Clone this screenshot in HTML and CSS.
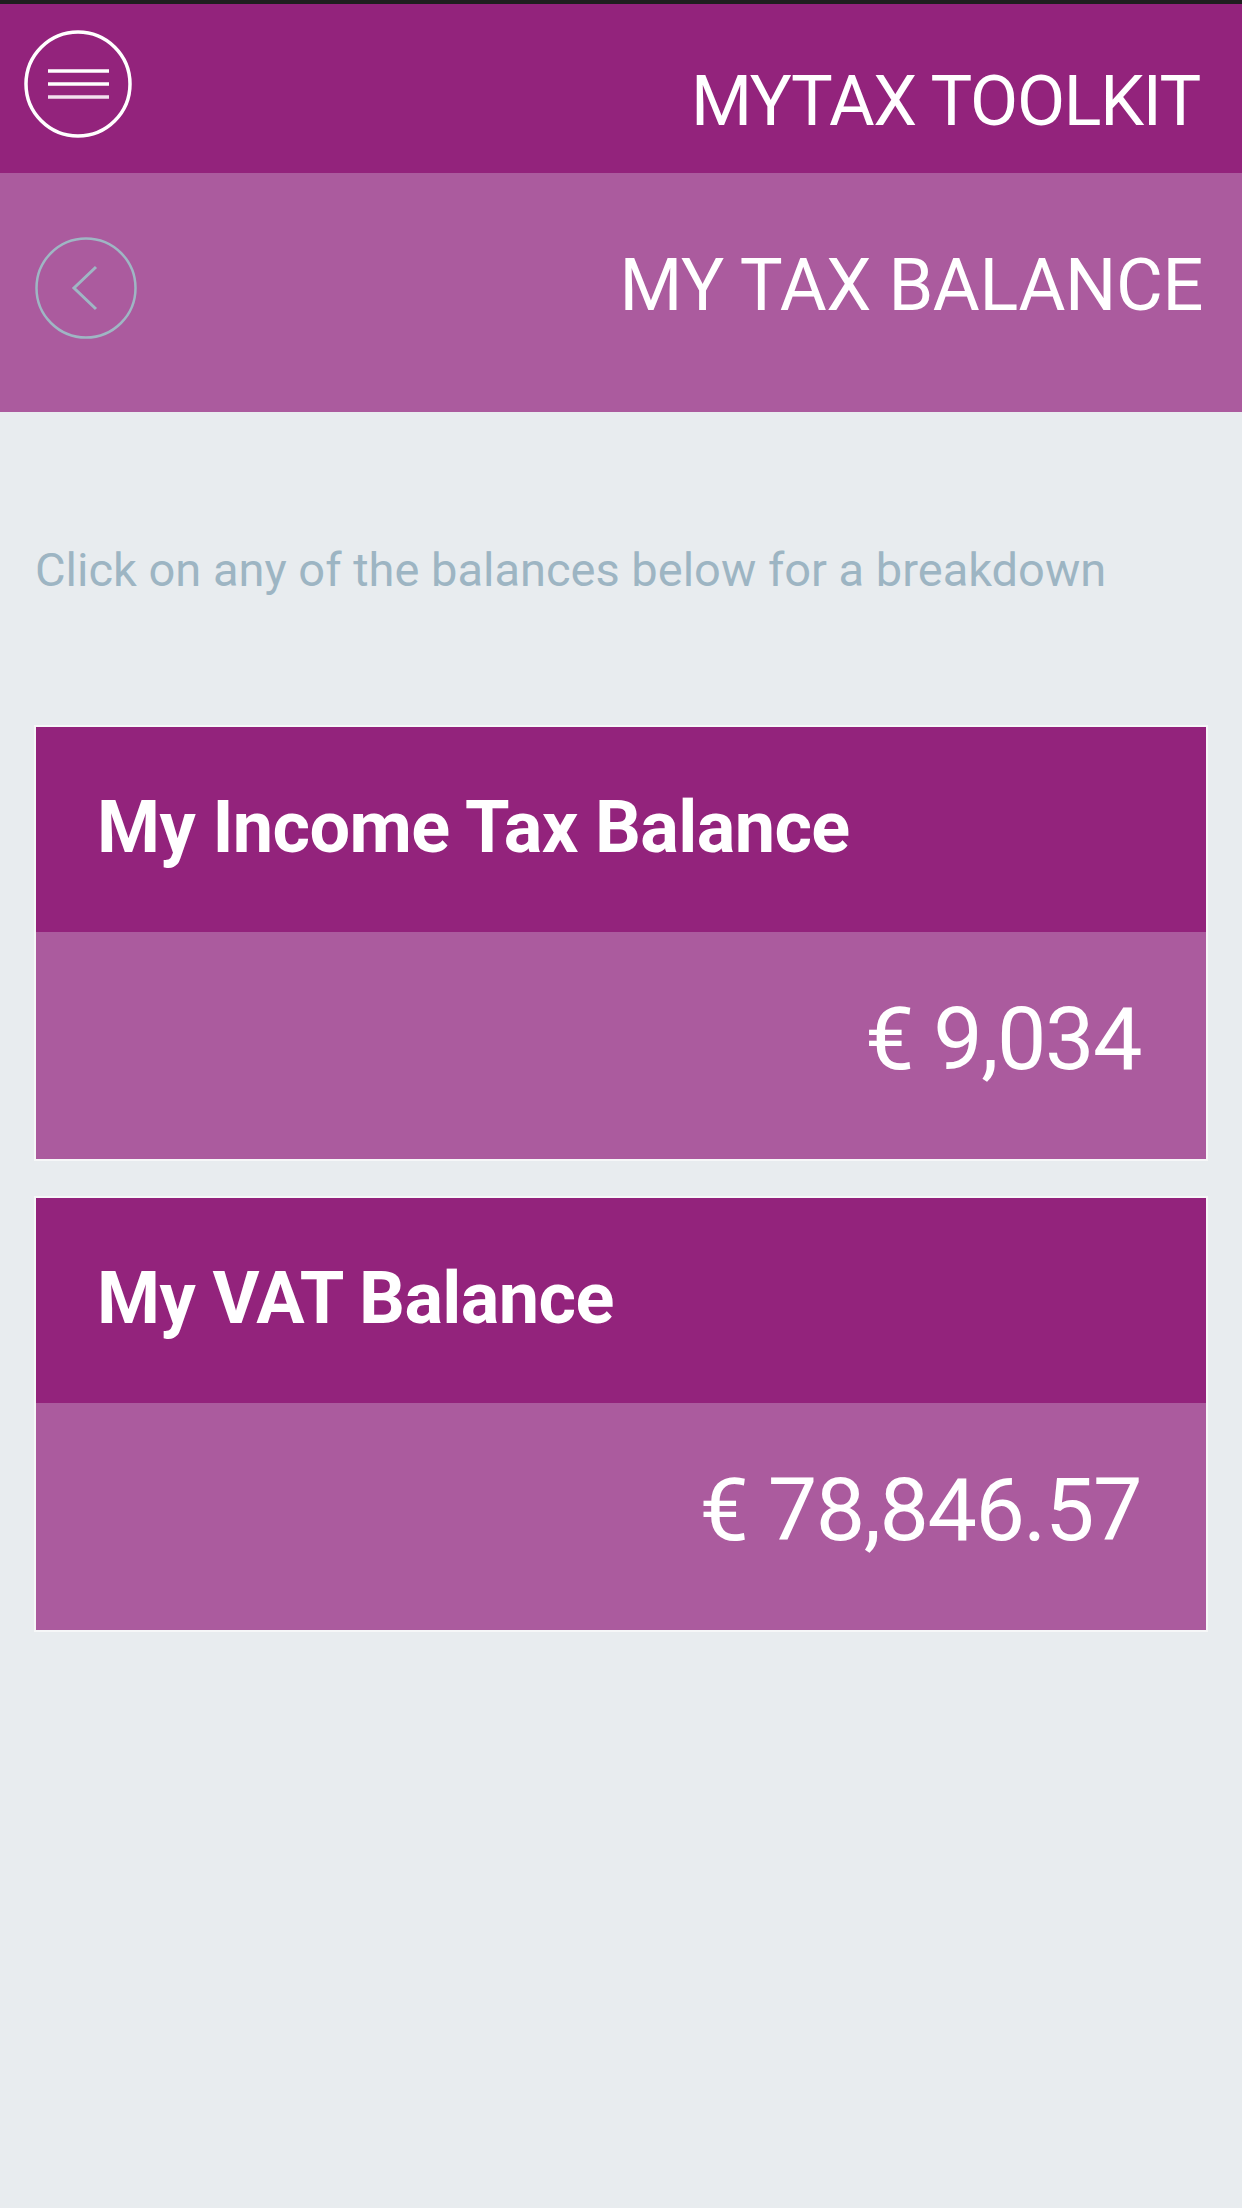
FILE: index.html
```html
<!DOCTYPE html>
<html lang="en">
<head>
<meta charset="utf-8">
<title>MyTax Toolkit</title>
<link rel="stylesheet" href="styles.css">
</head>
<body>
<div class="statusline"></div>
<header class="appbar">
  <button class="menu-btn" aria-label="Menu">
    <svg width="108" height="108" viewBox="0 0 108 108">
      <circle cx="54" cy="54" r="52" fill="none" stroke="#ffffff" stroke-width="3.5"/>
      <line x1="24" y1="41" x2="85" y2="41" stroke="#ffffff" stroke-width="3.5"/>
      <line x1="24" y1="54" x2="85" y2="54" stroke="#ffffff" stroke-width="3.5"/>
      <line x1="24" y1="67" x2="85" y2="67" stroke="#f2e0ee" stroke-width="3.5"/>
    </svg>
  </button>
  <h1 class="app-title">MYTAX TOOLKIT</h1>
</header>
<section class="pagebar">
  <button class="back-btn" aria-label="Back">
    <svg width="102" height="102" viewBox="0 0 102 102">
      <circle cx="51" cy="51" r="49.5" fill="none" stroke="#9fb6c4" stroke-width="2.5"/>
      <polyline points="61,30 39,51 61,72" fill="none" stroke="#9fb6c4" stroke-width="3"/>
    </svg>
  </button>
  <h2 class="page-title">MY TAX BALANCE</h2>
</section>
<main class="content">
  <p class="hint">Click on any of the balances below for a breakdown</p>
  <div class="cards">
    <div class="card">
      <div class="card-head">My Income Tax Balance</div>
      <div class="card-amount">€ 9,034</div>
    </div>
    <div class="card">
      <div class="card-head">My VAT Balance</div>
      <div class="card-amount">€ 78,846.57</div>
    </div>
  </div>
</main>
</body>
</html>
```
FILE: styles.css
```css
html, body {
  margin: 0;
  padding: 0;
}
body {
  background: #e8ecef;
  font-family: Roboto, "Noto Sans", "Liberation Sans", sans-serif;
  width: 1242px;
  min-height: 2208px;
}
.statusline {
  height: 4px;
  background: #1f1f1f;
}
.appbar {
  height: 169px;
  background: #93237c;
  display: flex;
  justify-content: space-between;
  align-items: flex-start;
  padding: 0 42px 0 24px;
  box-sizing: border-box;
}
.menu-btn, .back-btn {
  border: 0;
  padding: 0;
  background: none;
  display: block;
}
.menu-btn {
  margin-top: 26px;
  width: 108px;
  height: 108px;
}
.menu-btn svg, .back-btn svg { display: block; }
.app-title {
  margin: 62px 0 0 0;
  font-size: 70px;
  line-height: 70px;
  font-weight: 400;
  color: #ffffff;
  letter-spacing: -1.3px;
}
.pagebar {
  height: 239px;
  background: #ab5b9e;
  display: flex;
  justify-content: space-between;
  align-items: flex-start;
  padding: 0 39px 0 35px;
  box-sizing: border-box;
}
.back-btn {
  margin-top: 64px;
  width: 102px;
  height: 102px;
}
.page-title {
  margin: 77px 0 0 0;
  font-size: 72px;
  line-height: 72px;
  font-weight: 400;
  color: #ffffff;
  letter-spacing: -0.4px;
}
.content {
  padding: 0 35px;
}
.hint {
  margin: 134px 0 0 0;
  font-size: 47px;
  line-height: 47px;
  color: #9db5c3;
  letter-spacing: 0;
}
.cards {
  margin-top: 132px;
  display: flex;
  flex-direction: column;
  gap: 35px;
}
.card {
  border: 2px solid #f6f7f8;
  margin: 0 -1px;
}
.card-head {
  height: 205px;
  background: #93237c;
  color: #ffffff;
  font-weight: 700;
  font-size: 72px;
  line-height: 72px;
  padding: 65px 0 0 61px;
  box-sizing: border-box;
  letter-spacing: -0.6px;
}
.card-amount {
  height: 227px;
  background: #ab5b9e;
  color: #ffffff;
  font-size: 88px;
  line-height: 88px;
  text-align: right;
  padding: 63px 65px 0 0;
  box-sizing: border-box;
  letter-spacing: -1.5px;
}
```
